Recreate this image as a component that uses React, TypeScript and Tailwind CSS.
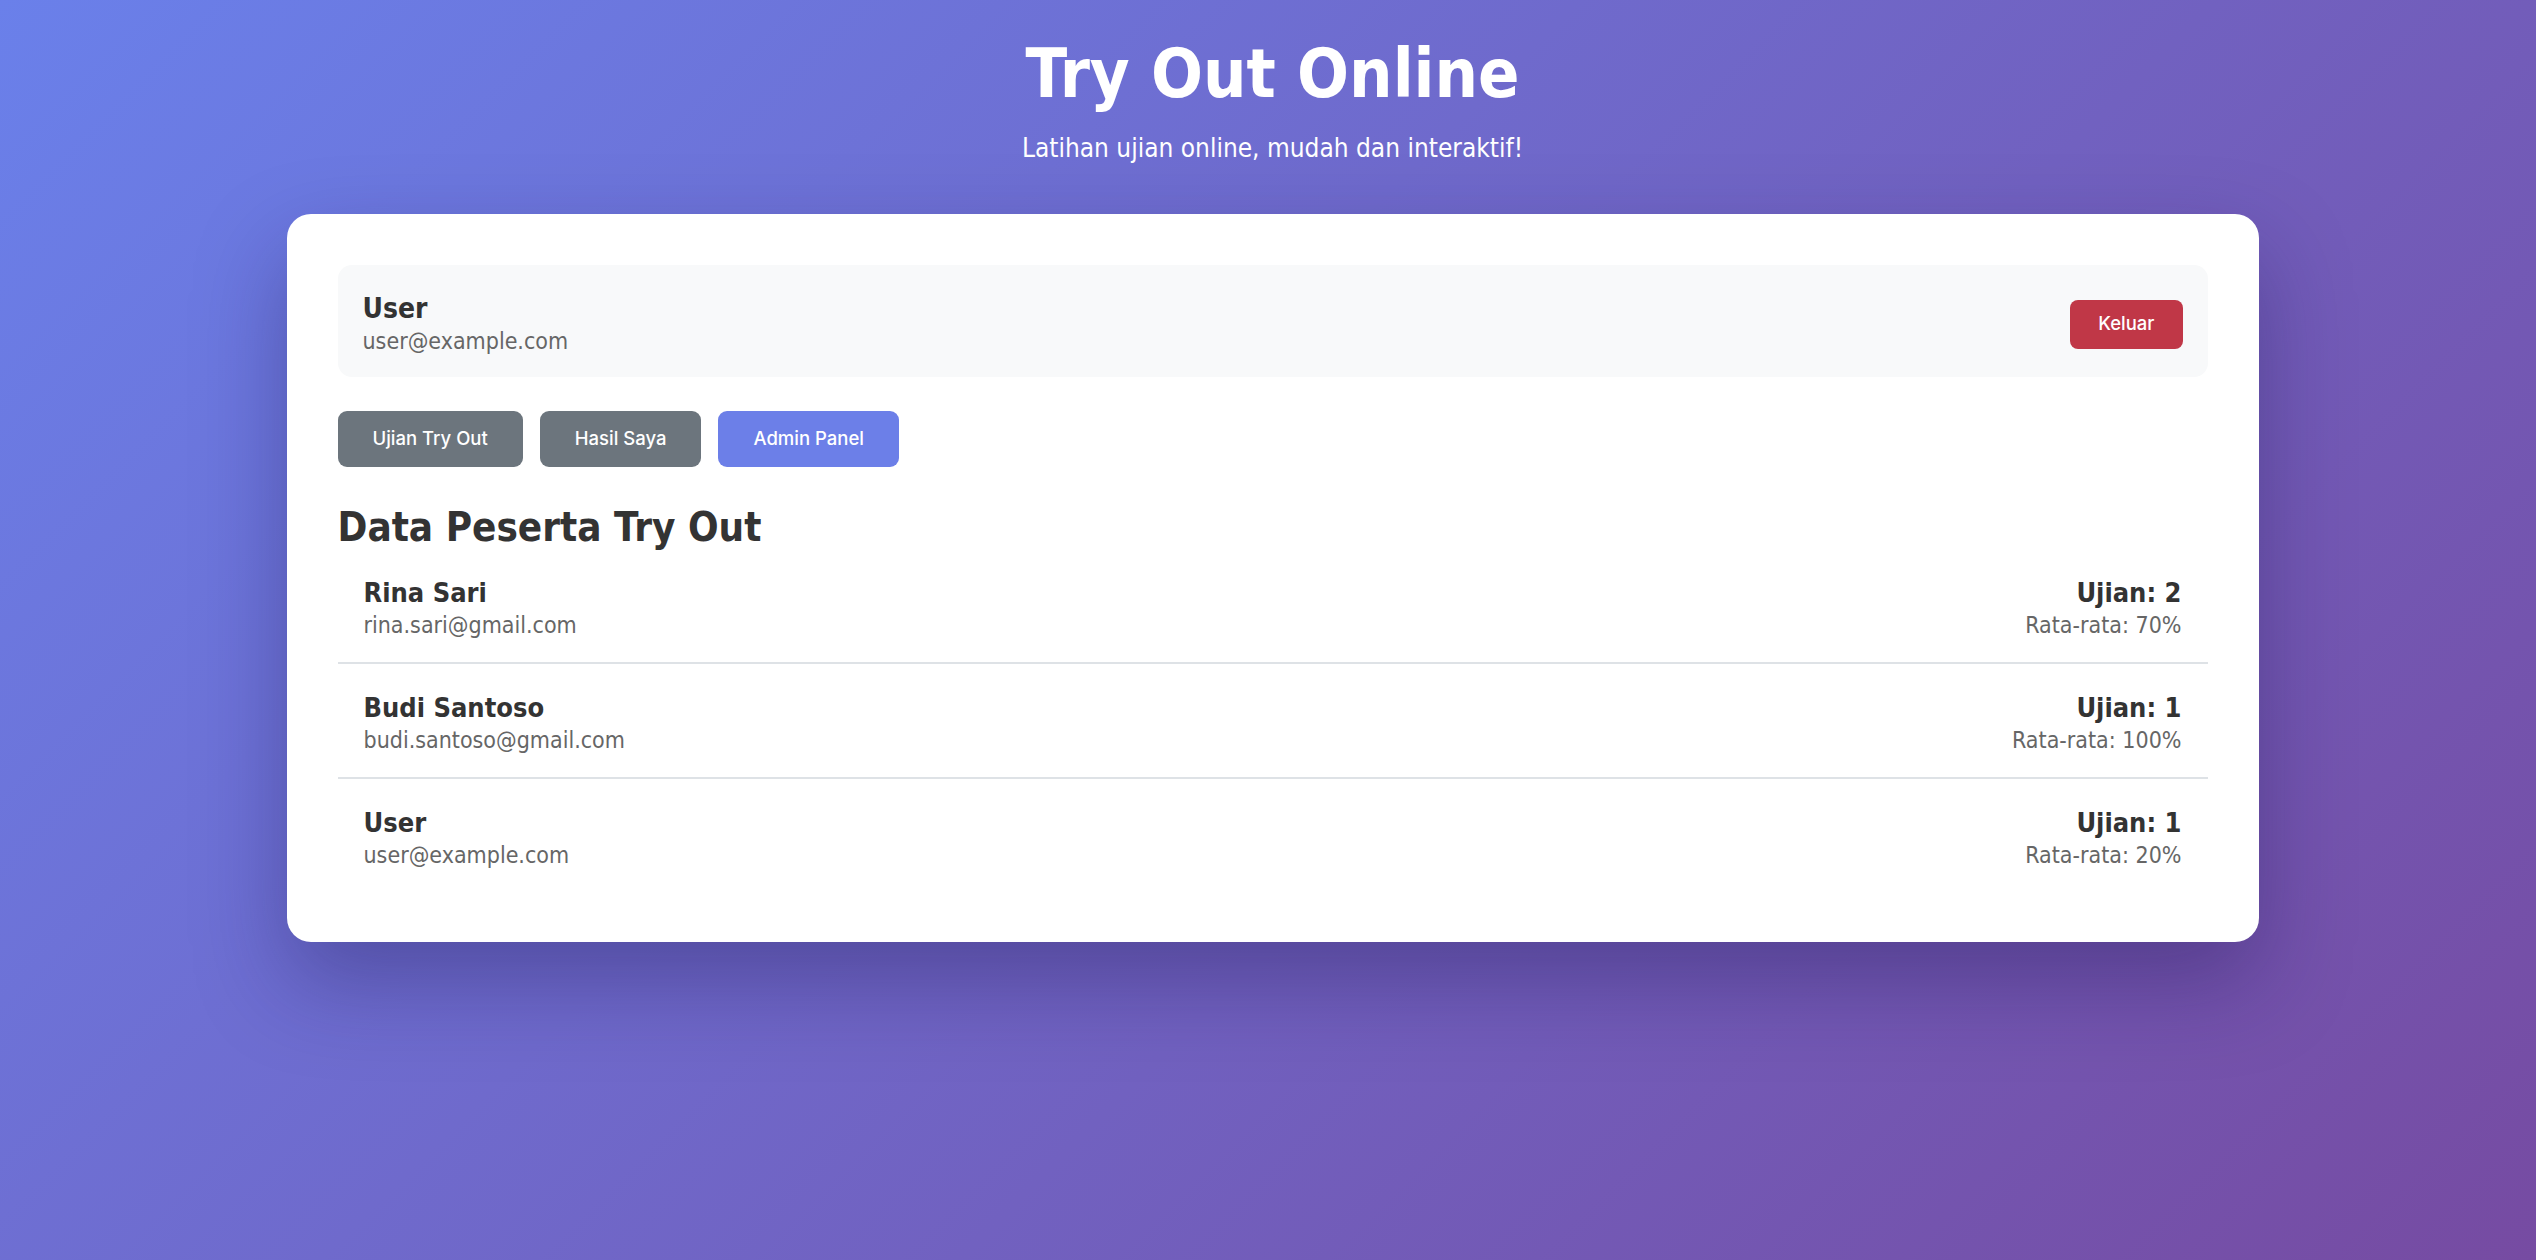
import React from 'react';

const peserta = [
  { name: 'Rina Sari', email: 'rina.sari@gmail.com', ujian: 2, avg: 70 },
  { name: 'Budi Santoso', email: 'budi.santoso@gmail.com', ujian: 1, avg: 100 },
  { name: 'User', email: 'user@example.com', ujian: 1, avg: 20 },
];

const body = { fontFamily: '"DejaVu Sans Condensed", "DejaVu Sans", Verdana, sans-serif' };
const ui = { fontFamily: 'Inter, "Liberation Sans", Arial, sans-serif' };

export default function App() {
  return (
    <div
      className="min-h-[1260px] w-full pl-[9px] bg-[linear-gradient(135deg,#6a80ea_0%,#764ba2_100%)] flex flex-col items-center text-[#333]"
      style={body}
    >
      {/* header */}
      <h1 className="pt-[34px] text-[68px] leading-[80px] font-bold text-white">Try Out Online</h1>
      <p className="mt-[18px] text-[26px] leading-[32px] text-white">Latihan ujian online, mudah dan interaktif!</p>

      {/* card */}
      <div className="mt-[50px] w-[1972px] bg-white rounded-[24px] px-[51px] pt-[51px] pb-[50px] shadow-[0_40px_90px_rgba(30,20,80,0.35)]">
        <div className="flex items-center justify-between bg-[#f8f9fa] rounded-[14px] px-[25px] pt-[27px] pb-[21px]">
          <div>
            <div className="text-[28px] leading-[34px] font-bold text-[#333]">User</div>
            <div className="text-[23px] leading-[30px] text-[#666]">user@example.com</div>
          </div>
          <button
            className="h-[49px] px-[28px] rounded-[8px] bg-[#c03747] text-white text-[18.5px] font-medium"
            style={ui}
          >
            Keluar
          </button>
        </div>

        <div className="mt-[34px] flex gap-[17px]" style={ui}>
          <button className="h-[56px] px-[35px] rounded-[9px] bg-[#6c757d] text-white text-[18.5px] font-medium">Ujian Try Out</button>
          <button className="h-[56px] px-[35px] rounded-[9px] bg-[#6c757d] text-white text-[18.5px] font-medium">Hasil Saya</button>
          <button className="h-[56px] px-[35px] rounded-[9px] bg-[#6c7fe8] text-white text-[18.5px] font-medium">Admin Panel</button>
        </div>

        <h2 className="mt-[38px] text-[40px] leading-[44px] font-bold text-[#333]">Data Peserta Try Out</h2>

        <div>
          {peserta.map((p, i) => (
            <div
              key={p.email}
              className={
                'flex justify-between px-[26px] pt-[27px] pb-[22px] ' +
                (i < peserta.length - 1 ? 'border-b-2 border-[#dee2e6]' : '')
              }
            >
              <div>
                <div className="text-[27px] leading-[34px] font-bold text-[#333]">{p.name}</div>
                <div className="text-[23px] leading-[30px] text-[#666]">{p.email}</div>
              </div>
              <div className="text-right">
                <div className="text-[27px] leading-[34px] font-bold text-[#333]">Ujian: {p.ujian}</div>
                <div className="text-[23px] leading-[30px] text-[#666]">Rata-rata: {p.avg}%</div>
              </div>
            </div>
          ))}
        </div>
      </div>
    </div>
  );
}
